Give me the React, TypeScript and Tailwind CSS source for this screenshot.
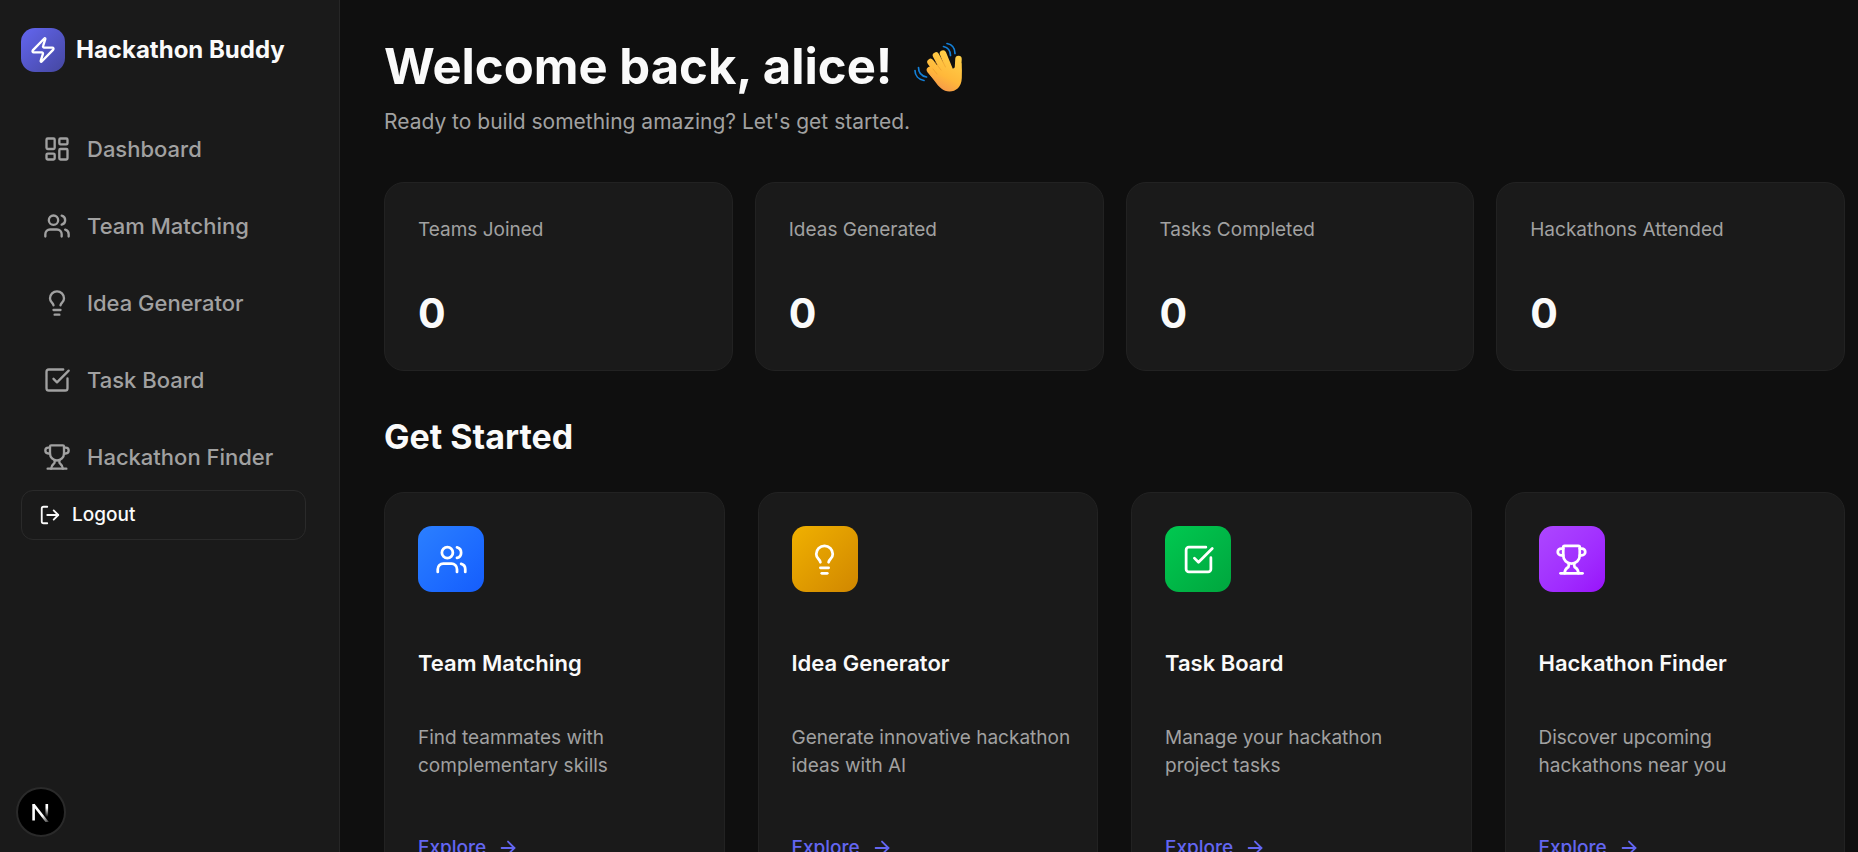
import { ArrowRight, LayoutDashboard, Lightbulb, LogOut, LucideIcon, SquareCheckBig, Trophy, Users, Zap } from "lucide-react";

interface INavItem {
    label: string;
    icon: LucideIcon;
}
interface IFeature extends INavItem {
    description: string;
    gradient: string;
}

const navItems: INavItem[] = [
    { label: "Dashboard", icon: LayoutDashboard },
    { label: "Team Matching", icon: Users },
    { label: "Idea Generator", icon: Lightbulb },
    { label: "Task Board", icon: SquareCheckBig },
    { label: "Hackathon Finder", icon: Trophy },
];

const stats = [
    { label: "Teams Joined", value: 0 },
    { label: "Ideas Generated", value: 0 },
    { label: "Tasks Completed", value: 0 },
    { label: "Hackathons Attended", value: 0 },
];

const features: IFeature[] = [
    { label: "Team Matching", icon: Users, description: "Find teammates with complementary skills", gradient: "from-blue-500 to-blue-600" },
    { label: "Idea Generator", icon: Lightbulb, description: "Generate innovative hackathon ideas with AI", gradient: "from-yellow-500 to-yellow-600" },
    { label: "Task Board", icon: SquareCheckBig, description: "Manage your hackathon project tasks", gradient: "from-green-500 to-green-600" },
    { label: "Hackathon Finder", icon: Trophy, description: "Discover upcoming hackathons near you", gradient: "from-purple-500 to-purple-600" },
];

const WavingHand = () => (
    <svg viewBox="0 0 49 50" className="h-[50px] w-[49px]" role="img" aria-label="Waving hand">
        <defs>
            <linearGradient id="skin" gradientUnits="userSpaceOnUse" x1="38" y1="12" x2="20" y2="46">
                <stop offset="0" stopColor="#ffcf48" />
                <stop offset="0.6" stopColor="#ffb83a" />
                <stop offset="1" stopColor="#f5964a" />
            </linearGradient>
        </defs>
        <g fill="none" stroke="#1480d8" strokeWidth="1.7" strokeLinecap="round">
            <path d="M33 1.5c5 1 8 4.500 8 10" />
            <path d="M29.5 4.5c4 1 7 4 7 9" />
            <path d="M1 28.5c0 5 3.5 9 9 10" />
            <path d="M4.5 25.5c0 5 3 8.500 8 9.500" />
        </g>
        <g fill="none" stroke="url(#skin)" strokeWidth="6.5" strokeLinecap="round">
            <path d="M16 28 26 39" />
            <path d="M16.5 20 29 37" />
            <path d="M22 13.5 33 34" />
            <path d="M29 11.5 37 31" />
            <path d="M44.5 17 43.5 34" />
        </g>
        <path fill="url(#skin)" d="M18 25 33 19l5.5 8 9-6c.5 5 .5 10 .3 15C47.5 45 42 49.5 35.5 49.5 29 49.5 25 45 21 39.5L13.5 30z" />
        <g fill="none" stroke="#e8912b" strokeWidth="0.8" strokeLinecap="round" opacity="0.6">
            <path d="M19 27 23 32" />
            <path d="M21 20 27 28" />
            <path d="M27 16.5 31.5 25" />
        </g>
    </svg>
);

const Sidebar = () => (
    <aside className="w-[340px] shrink-0 border-r border-[#262626] bg-[#1a1a1a] px-[21px] pt-7">
        <div className="flex items-center gap-[11px]">
            <div className="flex size-11 items-center justify-center rounded-[14px] bg-linear-to-br from-[#6366f1] to-[#4547a0]">
                <Zap className="size-7 text-white" />
            </div>
            <span className="text-2xl font-bold">Hackathon Buddy</span>
        </div>
        <nav className="mt-11 flex flex-col gap-[11px]">
            {navItems.map(({ label, icon: Icon }) => (
                <a key={label} href="#" className="flex h-[66px] items-center gap-4 px-[22px] text-[22px] font-medium text-[#a1a1a1]">
                    <Icon className="size-7" />
                    {label}
                </a>
            ))}
        </nav>
        <button className="flex h-[50px] w-[285px] items-center gap-[11px] rounded-xl border border-[#2a2a2a] px-[17px] text-[19px] font-medium">
            <LogOut className="size-[22px]" />
            Logout
        </button>
    </aside>
);

const StatCard = ({ label, value }: { label: string; value: number }) => (
    <div className="rounded-[20px] border border-[#222] bg-[#1a1a1a] px-[33px] pt-[33px] pb-8">
        <div className="text-[19px] leading-7 text-[#a1a1a1]">{label}</div>
        <div className="mt-11 text-[41px] leading-[50px] font-bold">{value}</div>
    </div>
);

const FeatureCard = ({ label, icon: Icon, description, gradient }: IFeature) => (
    <div className="rounded-[20px] border border-[#222] bg-[#1a1a1a] py-[33px] pr-[25px] pl-[33px]">
        <div className={`flex size-[66px] items-center justify-center rounded-[14px] bg-linear-to-br ${gradient}`}>
            <Icon className="size-[33px] text-white" />
        </div>
        <h3 className="mt-14 text-[22px] leading-[30px] font-semibold">{label}</h3>
        <p className="mt-[46px] text-[19px] leading-7 text-[#a1a1a1]">{description}</p>
        <a href="#" className="mt-[54px] flex items-center gap-[11px] text-[19px] leading-7 font-medium text-[#6366f1]">
            Explore
            <ArrowRight className="size-[22px]" />
        </a>
    </div>
);

const DevBadge = () => (
    <button aria-label="Open dev tools" className="fixed bottom-[15px] left-4 flex size-[50px] items-center justify-center rounded-full border-2 border-[#2a2a2a] bg-black">
        <svg viewBox="0 0 20 20" className="size-5" fill="none" strokeWidth="2.6">
            <defs>
                <linearGradient id="stem" x1="0" y1="0" x2="0" y2="1">
                    <stop offset="0.3" stopColor="#fff" />
                    <stop offset="1" stopColor="#fff" stopOpacity="0" />
                </linearGradient>
                <linearGradient id="slash" x1="0" y1="0" x2="1" y2="1">
                    <stop offset="0.6" stopColor="#fff" />
                    <stop offset="1" stopColor="#fff" stopOpacity="0.2" />
                </linearGradient>
            </defs>
            <path d="M2.6 18.5V2" stroke="#fff" />
            <path d="M2.5 2.5 17 21" stroke="url(#slash)" />
            <rect x="14.5" y="2" width="2.6" height="13" fill="url(#stem)" />
        </svg>
    </button>
);

const App = () => {
    return (
        <div className="flex h-screen overflow-hidden bg-[#0f0f0f] font-[Inter,sans-serif] text-[#fafafa]">
            <Sidebar />
            <main className="min-w-0 flex-1 pt-[37px] pr-[13px] pl-11">
                <h1 className="flex items-center gap-[22px] text-[49px] leading-[60px] font-bold">
                    Welcome back, alice!
                    <WavingHand />
                </h1>
                <p className="mt-2 text-[21px] leading-[33px] text-[#a1a1a1]">Ready to build something amazing? Let's get started.</p>
                <section className="mt-11 grid grid-cols-4 gap-[22px]">
                    {stats.map((stat) => <StatCard key={stat.label} {...stat} />)}
                </section>
                <h2 className="mt-11 text-[34px] leading-[44px] font-bold">Get Started</h2>
                <section className="mt-[33px] grid grid-cols-4 gap-[33px]">
                    {features.map((feature) => <FeatureCard key={feature.label} {...feature} />)}
                </section>
            </main>
            <DevBadge />
        </div>
    );
};

export default App;
